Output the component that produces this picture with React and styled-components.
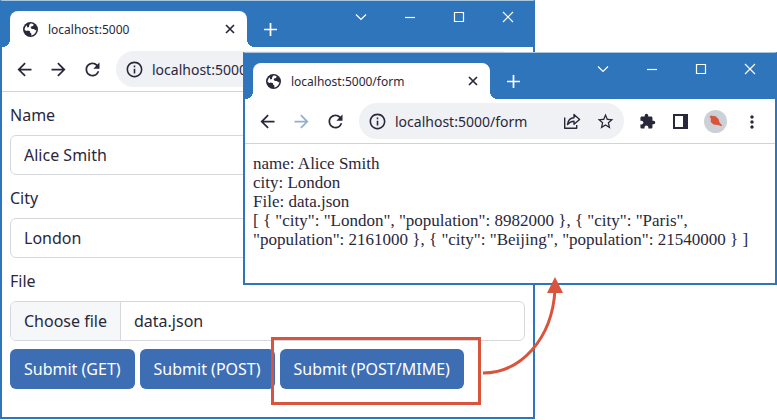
import React, { useState } from "react";
import styled, { createGlobalStyle } from "styled-components";
import {
  MdArrowBack,
  MdArrowForward,
  MdRefresh,
  MdInfoOutline,
  MdStarBorder,
  MdExtension,
  MdMoreVert,
} from "react-icons/md";

const blue = "#2f75bb";
const ink = "#29283b";
const red = "#da533c";
const line = "#d6d8dc";

const GlobalStyle = createGlobalStyle`
  * { box-sizing: border-box; }
  body {
    margin: 0;
    background: #fff;
    color: ${ink};
    font-family: "Noto Sans", "Open Sans", sans-serif;
    font-size: 16px;
    overflow: hidden;
  }
  button, input { font: inherit; color: inherit; }
  svg { display: block; flex: none; }
`;

const Desktop = styled.main`
  position: relative;
  padding-right: 242px;
`;

const Frame = styled.section`
  background: #fff;
  border: 2px solid ${blue};
  border-top: 1px solid #a9c6df;
`;

const FloatingFrame = styled(Frame)`
  position: absolute;
  z-index: 1;
  top: 52px;
  left: 243px;
  right: 0;
`;

const TitleBar = styled.header`
  display: flex;
  justify-content: space-between;
  height: 46px;
  padding: 10px 8px 0;
  background: ${blue};
  color: #fff;
`;

const TabStrip = styled.div`
  display: flex;
  align-items: center;
  gap: 14px;
`;

const Tab = styled.div`
  position: relative;
  display: flex;
  align-items: center;
  gap: 10px;
  width: 237px;
  height: 36px;
  padding: 0 10px 0 13px;
  border-radius: 8px 8px 0 0;
  background: #fff;
  color: ${ink};
  font-size: 12px;

  &::before,
  &::after {
    content: "";
    position: absolute;
    bottom: 0;
    width: 8px;
    height: 8px;
  }
  &::before {
    right: 100%;
    background: radial-gradient(circle at 0 0, transparent 8px, #fff 8px);
  }
  &::after {
    left: 100%;
    background: radial-gradient(circle at 100% 0, transparent 8px, #fff 8px);
  }
`;

const TabTitle = styled.span`
  flex: 1;
`;

const IconButton = styled.button`
  display: grid;
  place-items: center;
  width: ${(p) => p.$size || 18}px;
  height: ${(p) => p.$size || 18}px;
  padding: 0;
  border: 0;
  background: none;
  color: inherit;

  &:disabled { color: #8fb0cf; }
`;

const WindowControls = styled.div`
  display: flex;
  align-items: center;
  gap: 31px;
  height: 12px;
  padding-right: 8px;
`;

const Toolbar = styled.div`
  display: flex;
  align-items: center;
  gap: 14px;
  height: 45px;
  padding: 0 15px 0 12px;
  border-bottom: 1px solid #cfd3da;
`;

const AddressBar = styled.label`
  display: flex;
  align-items: center;
  flex: 1;
  gap: 8px;
  min-width: 0;
  height: 36px;
  padding: 0 10px 0 9px;
  border-radius: 18px;
  background: #eff1f4;
`;

const AddressInput = styled.input`
  flex: 1;
  min-width: 0;
  padding: 0;
  border: 0;
  outline: 0;
  background: none;
  font-size: 14px;
`;

const Actions = styled.div`
  display: flex;
  align-items: center;
  gap: 15px;
`;

const Avatar = styled.span`
  display: grid;
  place-items: center;
  width: 23px;
  height: 23px;
  border-radius: 50%;
  background: #ccd1d8;
`;

const Form = styled.form`
  display: flex;
  flex-direction: column;
  gap: 11px;
  padding: 11px 8px 28px;
`;

const Field = styled.div`
  display: flex;
  flex-direction: column;
  gap: 8px;
`;

const FieldLabel = styled.label`
  line-height: 24px;
`;

const TextInput = styled.input`
  width: 100%;
  height: 40px;
  padding: 0 13px;
  border: 1px solid ${line};
  border-radius: 6px;
  background: #fff;
`;

const FilePicker = styled.label`
  display: flex;
  height: 40px;
  overflow: hidden;
  border: 1px solid ${line};
  border-radius: 6px;
  line-height: 38px;
`;

const HiddenFileInput = styled.input`
  position: absolute;
  width: 1px;
  height: 1px;
  opacity: 0;
`;

const FileButton = styled.span`
  padding: 0 13px;
  border-right: 1px solid ${line};
  background: #f6f7f8;
`;

const FileName = styled.span`
  padding: 0 13px;
`;

const FormFooter = styled.div`
  display: flex;
  gap: 5px;
`;

const SubmitButton = styled.button`
  height: 40px;
  padding: 0 14px;
  border: 0;
  border-radius: 6px;
  background: #3d6eb4;
  color: #fff;
  white-space: nowrap;
`;

const Highlighted = styled.div`
  position: relative;
`;

const Ring = styled.div`
  position: absolute;
  z-index: 2;
  inset: -12px -17px -16px -9px;
  border: 3px solid ${red};
  pointer-events: none;
`;

const ArrowDrawing = styled.svg`
  position: absolute;
  z-index: 2;
  left: 100%;
  bottom: 0;
  pointer-events: none;
`;

const Output = styled.div`
  padding: 10px 8px 34px;
  font-family: "Liberation Serif", "Times New Roman", serif;
  font-size: 17px;
  line-height: 19px;
`;

const OutputLine = styled.p`
  margin: 0;
`;

const Glyph = ({ d, size = 12, width = 1.2 }) => (
  <svg width={size} height={size} viewBox="0 0 12 12" fill="none" stroke="currentColor" strokeWidth={width}>
    <path d={d} />
  </svg>
);

const GlobeIcon = () => (
  <svg width="15" height="15" viewBox="0 0 15 15">
    <circle cx="7.5" cy="7.5" r="7.5" fill="currentColor" />
    <path
      fill="#fff"
      d="M7.5 1.5C9 1.5 10 1.9 10.8 2.6L10 4L8.2 4.4L7.6 5.8L9 7H11L12.2 8.2L13.4 7.8C13.3 10 12 12 10 13L8 13.4L8.6 11.8L7.2 10.8L7 9.2L4.8 8.6L3.2 9L1.6 7.8C1.7 6 2.3 4.6 3.6 3.2L4.4 5.6L6 5L6.2 3Z"
    />
  </svg>
);

const ShareIcon = () => (
  <svg width="18" height="18" viewBox="0 0 18 18" fill="none" stroke="currentColor" strokeWidth="1.4" strokeLinejoin="round">
    <path d="M1.7 5.5V16.2H13.7V13" />
    <path d="M4.5 12.5C5 8.3 7.5 6 11 5.8V2.5L16.6 7.5L11 12.3V9.2C8.2 9.2 6.2 10.3 4.5 12.5Z" />
  </svg>
);

const SidePanelIcon = () => (
  <svg width="15" height="15" viewBox="0 0 15 15">
    <path fill="currentColor" fillRule="evenodd" d="M0 0H15V15H0ZM2 2V13H10V2Z" />
  </svg>
);

const BirdIcon = () => (
  <svg width="13" height="12" viewBox="0 0 13 12">
    <path fill={red} d="M.5 1.5L2.5 .5L5 1.2L6 .8L9.5 4L10.5 7.5L12.8 10V11.2L9 10L4.5 9.5L1.8 7L1.8 3.5Z" />
  </svg>
);

function BrowserWindow({ as: Shell = Frame, url, canGoForward, actions, children }) {
  return (
    <Shell aria-label={url}>
      <TitleBar>
        <TabStrip>
          <Tab>
            <GlobeIcon />
            <TabTitle>{url}</TabTitle>
            <IconButton $size={14} aria-label="Close tab">
              <Glyph d="M2 2L10 10M10 2L2 10" width={1.7} />
            </IconButton>
          </Tab>
          <IconButton aria-label="New tab">
            <Glyph d="M6 0V12M0 6H12" size={13} width={1.6} />
          </IconButton>
        </TabStrip>
        <WindowControls>
          <IconButton aria-label="Search tabs"><Glyph d="M1 3.5L6 8.5L11 3.5" /></IconButton>
          <IconButton aria-label="Minimize"><Glyph d="M1 6.5H11" /></IconButton>
          <IconButton aria-label="Maximize"><Glyph d="M1.5 1.5H10.5V10.5H1.5Z" /></IconButton>
          <IconButton aria-label="Close"><Glyph d="M1 1L11 11M11 1L1 11" /></IconButton>
        </WindowControls>
      </TitleBar>
      <Toolbar>
        <IconButton $size={20} aria-label="Back"><MdArrowBack size={21} /></IconButton>
        <IconButton $size={20} aria-label="Forward" disabled={!canGoForward}><MdArrowForward size={21} /></IconButton>
        <IconButton $size={20} aria-label="Reload"><MdRefresh size={21} /></IconButton>
        <AddressBar>
          <MdInfoOutline size={19} />
          <AddressInput aria-label="Address" defaultValue={url} />
          {actions && (
            <Actions>
              <IconButton type="button" aria-label="Share"><ShareIcon /></IconButton>
              <IconButton type="button" aria-label="Bookmark"><MdStarBorder size={19} /></IconButton>
            </Actions>
          )}
        </AddressBar>
        {actions && (
          <Actions>
            <IconButton aria-label="Extensions"><MdExtension size={17} /></IconButton>
            <IconButton aria-label="Side panel"><SidePanelIcon /></IconButton>
            <Avatar><BirdIcon /></Avatar>
            <IconButton aria-label="Menu"><MdMoreVert size={20} /></IconButton>
          </Actions>
        )}
      </Toolbar>
      {children}
    </Shell>
  );
}

export default function App() {
  const [fileName, setFileName] = useState("data.json");
  const pickFile = (e) => {
    if (e.target.files[0]) setFileName(e.target.files[0].name);
  };

  return (
    <>
      <GlobalStyle />
      <Desktop>
        <BrowserWindow url="localhost:5000" canGoForward>
          <Form onSubmit={(e) => e.preventDefault()}>
            <Field>
              <FieldLabel htmlFor="name">Name</FieldLabel>
              <TextInput id="name" name="name" defaultValue="Alice Smith" />
            </Field>
            <Field>
              <FieldLabel htmlFor="city">City</FieldLabel>
              <TextInput id="city" name="city" defaultValue="London" />
            </Field>
            <Field>
              <FieldLabel htmlFor="file">File</FieldLabel>
              <FilePicker>
                <HiddenFileInput id="file" name="file" type="file" onChange={pickFile} />
                <FileButton>Choose file</FileButton>
                <FileName>{fileName}</FileName>
              </FilePicker>
              <FormFooter>
                <SubmitButton type="submit">Submit (GET)</SubmitButton>
                <SubmitButton type="submit">Submit (POST)</SubmitButton>
                <Highlighted>
                  <SubmitButton type="submit">Submit (POST/MIME)</SubmitButton>
                  <Ring />
                  <ArrowDrawing width="100" height="112" viewBox="0 0 100 112" aria-hidden="true">
                    <path d="M19 96C56 96 88 63 91 13" fill="none" stroke={red} strokeWidth="3" />
                    <path d="M91 0L99 16H83Z" fill={red} />
                  </ArrowDrawing>
                </Highlighted>
              </FormFooter>
            </Field>
          </Form>
        </BrowserWindow>
        <BrowserWindow as={FloatingFrame} url="localhost:5000/form" actions>
          <Output>
            <OutputLine>name: Alice Smith</OutputLine>
            <OutputLine>city: London</OutputLine>
            <OutputLine>File: data.json</OutputLine>
            <OutputLine>
              {'[ { "city": "London", "population": 8982000 }, { "city": "Paris", "population": 2161000 }, { "city": "Beijing", "population": 21540000 } ]'}
            </OutputLine>
          </Output>
        </BrowserWindow>
      </Desktop>
    </>
  );
}
